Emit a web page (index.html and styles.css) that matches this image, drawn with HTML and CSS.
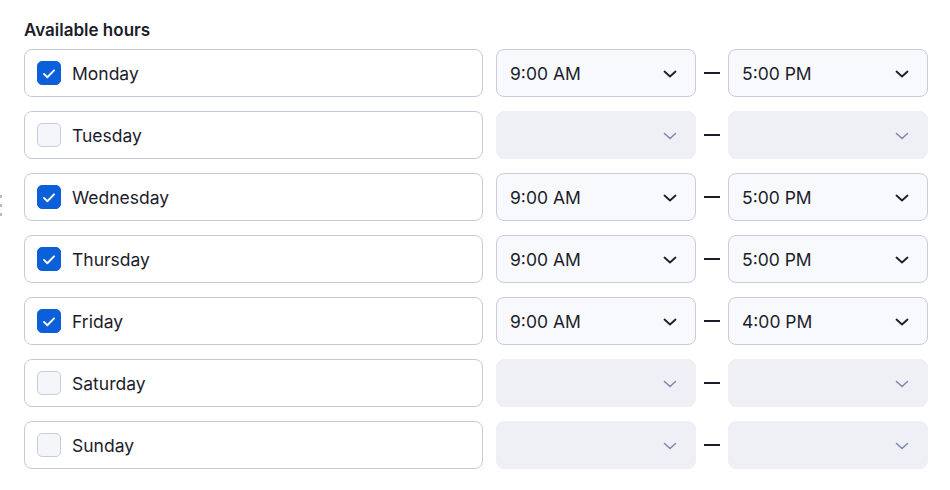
FILE: index.html
```html
<!DOCTYPE html>
<html>
<head>
<meta charset="utf-8">
<link rel="stylesheet" href="styles.css">
</head>
<body>
<div class="handle"><span></span><span></span><span></span></div>
<div class="panel">
  <div class="title">Available hours</div>
  <div class="rows">
    <div class="row">
      <div class="day"><span class="cb on"><svg viewBox="0 0 24 24"><path d="M6.5 12.5l3.7 3.6 7.3-7.6"/></svg></span><span class="name">Monday</span></div>
      <div class="sel"><span>9:00 AM</span><svg class="chev" viewBox="0 0 14 8"><path d="M1.5 1.5l5.5 5 5.5-5"/></svg></div>
      <div class="dash"></div>
      <div class="sel"><span>5:00 PM</span><svg class="chev" viewBox="0 0 14 8"><path d="M1.5 1.5l5.5 5 5.5-5"/></svg></div>
    </div>
    <div class="row">
      <div class="day"><span class="cb"></span><span class="name">Tuesday</span></div>
      <div class="sel off"><span></span><svg class="chev" viewBox="0 0 14 8"><path d="M1.5 1.5l5.5 5 5.5-5"/></svg></div>
      <div class="dash"></div>
      <div class="sel off"><span></span><svg class="chev" viewBox="0 0 14 8"><path d="M1.5 1.5l5.5 5 5.5-5"/></svg></div>
    </div>
    <div class="row">
      <div class="day"><span class="cb on"><svg viewBox="0 0 24 24"><path d="M6.5 12.5l3.7 3.6 7.3-7.6"/></svg></span><span class="name">Wednesday</span></div>
      <div class="sel"><span>9:00 AM</span><svg class="chev" viewBox="0 0 14 8"><path d="M1.5 1.5l5.5 5 5.5-5"/></svg></div>
      <div class="dash"></div>
      <div class="sel"><span>5:00 PM</span><svg class="chev" viewBox="0 0 14 8"><path d="M1.5 1.5l5.5 5 5.5-5"/></svg></div>
    </div>
    <div class="row">
      <div class="day"><span class="cb on"><svg viewBox="0 0 24 24"><path d="M6.5 12.5l3.7 3.6 7.3-7.6"/></svg></span><span class="name">Thursday</span></div>
      <div class="sel"><span>9:00 AM</span><svg class="chev" viewBox="0 0 14 8"><path d="M1.5 1.5l5.5 5 5.5-5"/></svg></div>
      <div class="dash"></div>
      <div class="sel"><span>5:00 PM</span><svg class="chev" viewBox="0 0 14 8"><path d="M1.5 1.5l5.5 5 5.5-5"/></svg></div>
    </div>
    <div class="row">
      <div class="day"><span class="cb on"><svg viewBox="0 0 24 24"><path d="M6.5 12.5l3.7 3.6 7.3-7.6"/></svg></span><span class="name">Friday</span></div>
      <div class="sel"><span>9:00 AM</span><svg class="chev" viewBox="0 0 14 8"><path d="M1.5 1.5l5.5 5 5.5-5"/></svg></div>
      <div class="dash"></div>
      <div class="sel"><span>4:00 PM</span><svg class="chev" viewBox="0 0 14 8"><path d="M1.5 1.5l5.5 5 5.5-5"/></svg></div>
    </div>
    <div class="row">
      <div class="day"><span class="cb"></span><span class="name">Saturday</span></div>
      <div class="sel off"><span></span><svg class="chev" viewBox="0 0 14 8"><path d="M1.5 1.5l5.5 5 5.5-5"/></svg></div>
      <div class="dash"></div>
      <div class="sel off"><span></span><svg class="chev" viewBox="0 0 14 8"><path d="M1.5 1.5l5.5 5 5.5-5"/></svg></div>
    </div>
    <div class="row">
      <div class="day"><span class="cb"></span><span class="name">Sunday</span></div>
      <div class="sel off"><span></span><svg class="chev" viewBox="0 0 14 8"><path d="M1.5 1.5l5.5 5 5.5-5"/></svg></div>
      <div class="dash"></div>
      <div class="sel off"><span></span><svg class="chev" viewBox="0 0 14 8"><path d="M1.5 1.5l5.5 5 5.5-5"/></svg></div>
    </div>
  </div>
</div>
</body>
</html>
```
FILE: styles.css
```css
html, body {
  margin: 0;
  padding: 0;
  background: #ffffff;
}
body {
  font-family: Inter, "Noto Sans", sans-serif;
  color: #1c1d2b;
  width: 950px;
  height: 490px;
  overflow: hidden;
  position: relative;
}
.handle {
  position: absolute;
  left: 0;
  top: 195px;
  display: flex;
  flex-direction: column;
  gap: 6px;
}
.handle span {
  width: 2px;
  height: 3px;
  background: #b7bac6;
  display: block;
}
.panel {
  padding: 20px 0 0 24px;
}
.title {
  font-size: 17px;
  font-weight: 600;
  line-height: 20px;
  height: 20px;
  margin-bottom: 9px;
  color: #1c1d2b;
}
.rows {
  display: flex;
  flex-direction: column;
  gap: 14px;
}
.row {
  display: flex;
  align-items: center;
  height: 48px;
}
.day {
  box-sizing: border-box;
  width: 459px;
  height: 48px;
  border: 1px solid #c5cadb;
  border-radius: 8px;
  display: flex;
  align-items: center;
  padding-left: 12px;
  gap: 11px;
}
.cb {
  box-sizing: border-box;
  width: 24px;
  height: 24px;
  border-radius: 5px;
  border: 1px solid #c9cdda;
  background: #f5f6fa;
  display: flex;
  align-items: center;
  justify-content: center;
}
.cb.on {
  background: #0b5fd8;
  border-color: #0b5fd8;
}
.cb svg {
  width: 23px;
  height: 23px;
  fill: none;
  stroke: #ffffff;
  stroke-width: 2;
  stroke-linecap: round;
  stroke-linejoin: round;
}
.name {
  font-size: 17.5px;
  line-height: 22px;
  padding-top: 1px;
  color: #1c1d2b;
}
.sel {
  box-sizing: border-box;
  width: 200px;
  height: 48px;
  margin-left: 13px;
  border: 1px solid #c8ccdb;
  border-radius: 8px;
  background: #f8f9fc;
  display: flex;
  align-items: center;
  justify-content: space-between;
  padding: 1px 18px 0 13px;
  font-size: 17.5px;
  color: #1c1d2b;
}
.sel.off {
  background: #eef0f6;
  border-color: #eef0f6;
}
.dash + .sel {
  margin-left: 8px;
}
.chev {
  width: 14px;
  height: 8px;
  fill: none;
  stroke: #1c1d2b;
  stroke-width: 1.8;
  stroke-linecap: round;
  stroke-linejoin: round;
}
.sel.off .chev {
  stroke: #7d88b0;
  stroke-width: 1.5;
}
.dash {
  width: 16px;
  height: 2px;
  background: #1c1d2b;
  margin-left: 8px;
}
```
